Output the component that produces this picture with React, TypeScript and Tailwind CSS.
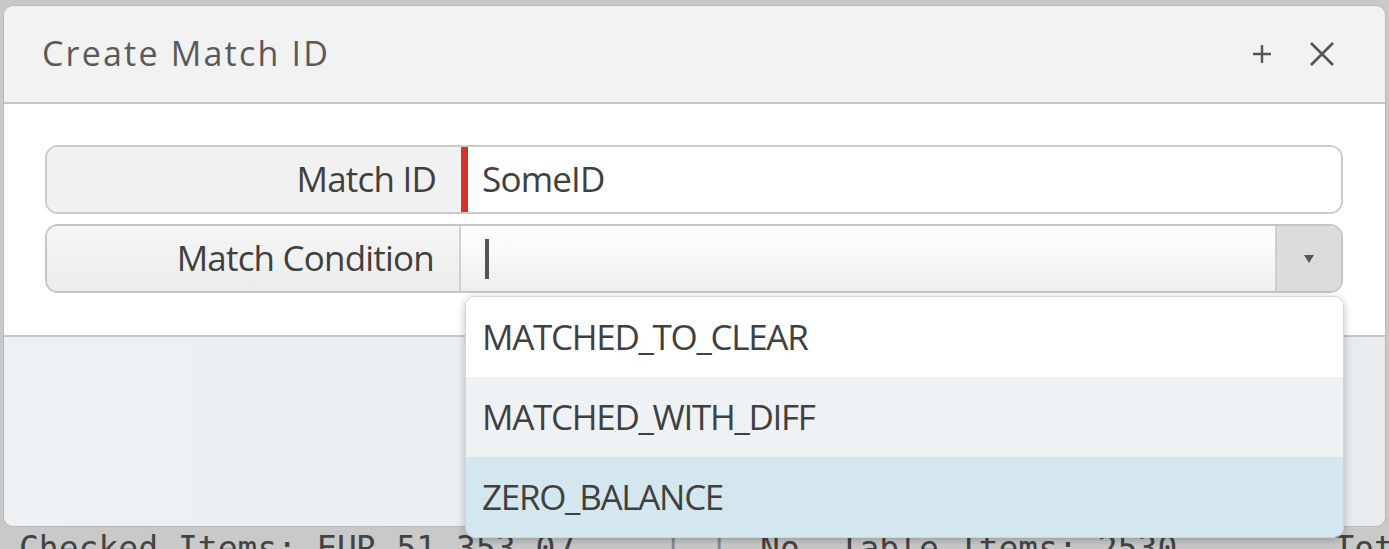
import React from "react";

const font = { fontFamily: '"Open Sans", "Noto Sans", sans-serif' };

const options = [
  { label: "MATCHED_TO_CLEAR", cls: "bg-white" },
  { label: "MATCHED_WITH_DIFF", cls: "bg-[#eef2f5]" },
  { label: "ZERO_BALANCE", cls: "bg-[#d5e7ee]" },
];

export default function App() {
  return (
    <div
      className="relative w-[1389px] h-[549px] overflow-hidden bg-[#c9c9c9] pt-[5px] px-[3px] text-[#454545]"
      style={font}
    >
      <div className="flex flex-col h-[522px] rounded-[10px] overflow-hidden border border-[#b9b9b9]">
        {/* header */}
        <div className="flex items-center h-[98px] shrink-0 bg-[#f2f2f2] border-b-2 border-[#c6c6c6] pl-[38px] pr-[50px]">
          <span className="text-[34px] leading-none tracking-[2.2px] text-[#5a5a5a] -mt-[3px]">Create Match ID</span>
          <div className="ml-auto flex items-center gap-[36px]">
            <svg width="22" height="22" viewBox="0 0 22 22">
              <path d="M11 2v18M2 11h18" stroke="#555" strokeWidth="2.4" />
            </svg>
            <svg width="26" height="26" viewBox="0 0 26 26">
              <path d="M2 2l22 22M24 2L2 24" stroke="#555" strokeWidth="2.6" />
            </svg>
          </div>
        </div>

        {/* form */}
        <div className="h-[231px] shrink-0 bg-white pt-[41px] pl-[41px] pr-[42px] flex flex-col gap-[10px]">
          <div className="flex h-[69px] rounded-[13px] border-2 border-[#cbcbcb] overflow-hidden">
            <div className="w-[414px] bg-[#f1f1f1] flex items-center justify-end pr-[25px] text-[35px] tracking-[-0.8px] text-[#404040]">
              Match ID
            </div>
            <div className="w-[7px] bg-[#d2352c]" />
            <div className="flex-1 bg-white flex items-center pl-[14px] text-[35px] tracking-[-0.8px] text-[#404040]">
              SomeID
            </div>
          </div>
          <div className="flex h-[69px] rounded-[13px] border-2 border-[#c6c6c6] overflow-hidden">
            <div className="w-[414px] bg-gradient-to-b from-[#f6f6f6] to-[#ececec] flex items-center justify-end pr-[25px] text-[35px] tracking-[-0.8px] text-[#404040] border-r-2 border-[#d0d0d0]">
              Match Condition
            </div>
            <div className="flex-1 bg-gradient-to-b from-white to-[#efefef] flex items-center pl-[24px]">
              <div className="w-[4px] h-[40px] bg-[#555]" />
            </div>
            <div className="w-[66px] bg-[#dcdcdc] border-l-2 border-[#cfcfcf] flex items-center justify-center">
              <svg width="10" height="8" viewBox="0 0 10 8">
                <path d="M0 0h10L5 8z" fill="#555" />
              </svg>
            </div>
          </div>
        </div>

        {/* footer */}
        <div className="flex-1 bg-gradient-to-r from-[#eef1f4] to-[#e9ecef] border-t-2 border-[#c6c6c6]" />
      </div>

      {/* status bar */}
      <div
        className="flex items-start h-[22px] pt-[5px] pl-[16px] text-[33px] leading-none text-[#444] whitespace-nowrap"
        style={{ fontFamily: '"DejaVu Sans Mono", monospace' }}
      >
        <span>Checked Items:  EUR 51,353.07</span>
        <span className="ml-[88px] text-[#888]">|</span>
        <span className="ml-[26px] text-[#888]">|</span>
        <span className="ml-[31px]">No. Table Items: 2530</span>
        <span className="ml-[157px]">Total</span>
      </div>

      {/* open dropdown list */}
      <div className="absolute left-[465px] top-[296px] w-[879px] h-[242px] rounded-[10px] overflow-hidden border border-[#d4d4d4] shadow-[0_2px_8px_rgba(0,0,0,0.25)] flex flex-col">
        {options.map((o) => (
          <div
            key={o.label}
            className={`flex-1 flex items-center pl-[16px] text-[35px] tracking-[-1.3px] text-[#404040] ${o.cls}`}
          >
            {o.label}
          </div>
        ))}
      </div>
    </div>
  );
}
